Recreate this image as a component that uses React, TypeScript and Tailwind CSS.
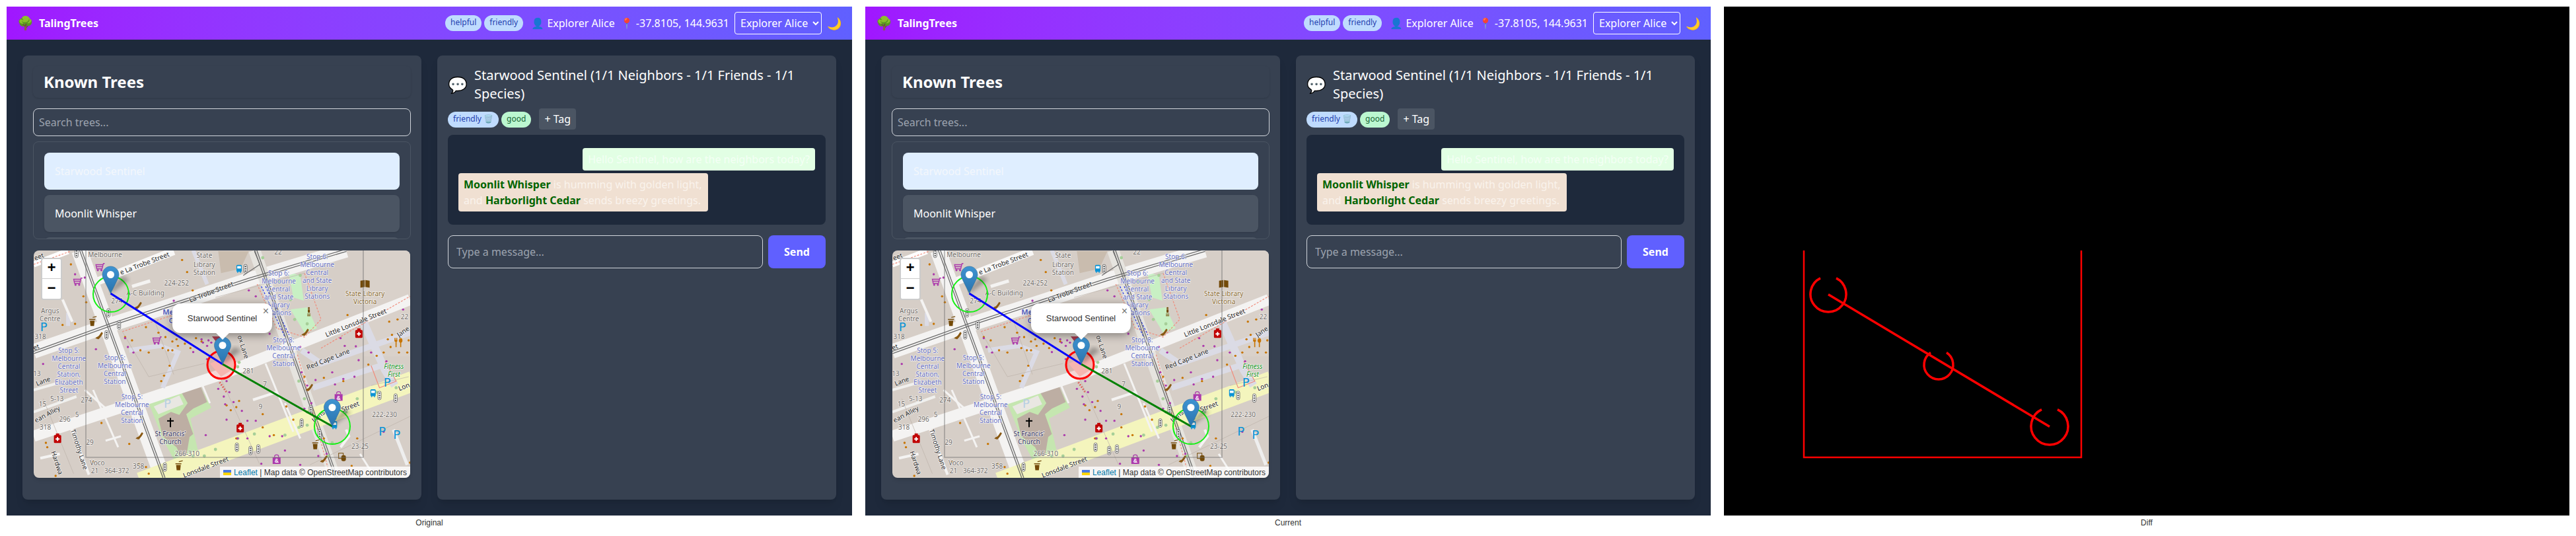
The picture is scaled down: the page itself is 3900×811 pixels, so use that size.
import React from "react";

const sans = "font-['Noto_Sans','DejaVu_Sans',sans-serif]";
const Z = (x: number, y: number): [number, number] => [x / 2.376 - 11, y / 3 - 9];
const P = (pts: number[][]) => pts.map((p) => Z(p[0], p[1]).map((n) => n.toFixed(1)).join(",")).join(" ");

const orange = [[175,360],[130,365],[205,235],[160,90],[215,262],[598,208],[560,70],[578,125],[430,375],[475,400],[500,420],[525,440],[545,460],[540,430],[570,450],[590,470],[610,425],[630,440],[490,470],[510,480],[525,480],[495,595],[515,550],[485,620],[440,490],[410,480],[380,435],[355,420],[270,810],[370,905],[405,995],[430,1010],[440,1040],[70,900],[75,920],[105,1050],[240,985],[735,752],[755,738],[765,710],[720,730],[850,770],[850,830],[755,880],[960,795],[890,865],[935,735],[1000,600],[1070,605],[1140,620],[1155,320],[1305,350],[1335,340],[1300,430],[1340,490],[1285,490],[1260,505],[1230,545],[1190,880],[1370,490],[1375,435],[1310,465],[1315,410],[1380,990],[1170,1005],[1070,880],[1155,1040]];
const purple = [[60,542],[250,475],[355,425],[365,465],[385,490],[600,488],[635,445],[655,435],[630,430],[650,460],[665,445],[650,520],[720,620],[690,655],[730,670],[710,690],[745,715],[715,725],[720,795],[775,755],[795,800],[825,800],[760,880],[645,865],[795,880],[845,995],[930,935],[875,870],[920,870],[1000,745],[1025,720],[1010,640],[1100,580],[1140,610],[1180,600],[1040,615],[1195,525],[1185,462],[1145,460],[1130,425],[1240,490],[1355,295],[1295,530],[990,580],[1015,490],[985,465],[800,208],[825,235],[850,275],[875,405],[175,135],[210,150],[530,255],[1285,850],[1080,950],[1050,960],[1110,635],[1120,1030],[985,1000]];
const greens = [[600,960],[640,960],[680,930],[760,880],[820,860],[930,865],[980,830],[1110,790],[1150,760],[1190,700],[1260,670],[1330,650],[765,535],[760,555],[1010,820],[880,20],[850,60],[910,170],[950,250],[965,340],[1010,360],[985,140],[1000,700],[1010,760],[980,620],[1100,900],[1085,960]];
const lights = [[180,40],[788,110],[295,310],[333,365],[288,410],[1270,685],[1328,697],[990,810],[757,920],[806,935],[834,928],[498,1010],[1023,750],[1055,860]];

const stops: [number, number, string[]][] = [
  [1046, 55, ["Stop 6:", "Melbourne", "Central", "and State", "Library", "Stations"]],
  [908, 131, ["Stop 6:", "Melbourne", "Central", "and State", "Library", "Stations"]],
  [153, 482, ["Stop 5:", "Melbourne", "Central", "Station,", "Elizabeth", "Street"]],
  [318, 513, ["Stop 5:", "Melbourne", "Central", "Station"]],
  [380, 690, ["Stop 5:", "Melbourne", "Central", "Station"]],
  [925, 433, ["Stop 8:", "Melbourne", "Central", "Station"]],
];
const greys: [number, number, string][] = [[540,176,"224-252"],[325,255,"274"],[428,220,"A-C Building"],[85,300,"Argus"],[85,338,"Centre"],[50,417,"318"],[905,33,"22"],[1360,328,"22"],[798,575,"281"],[858,635,"7"],[842,735,"9"],[110,700,"5-13"],[58,725,"15"],[216,705,"274"],[182,772,"5"],[138,792,"296"],[68,828,"318"],[38,585,"13"],[228,897,"29"],[255,992,"Voco"],[246,1028,"21"],[325,1026,"364-372"],[403,1005,"358"],[578,950,"266-310"],[1288,772,"222-230"],[1200,917,"23-25"],[283,46,"Melbourne"],[640,50,"State"],[640,90,"Library"],[640,128,"Station"]];
const roads: [number, number, string, number][] = [[425,85,"e La Trobe Street",-21],[665,215,"La Trobe Street",-21],[1185,355,"Little Lonsdale Street",-22],[1085,520,"Red Cape Lane",-22],[1355,395,"Jane",-35],[60,620,"Lane",-21],[75,770,"ean Alley",-28],[190,930,"Timothy Lane",72],[110,990,"Hardwa",72],[780,465,"ox Lane",72],[645,1010,"Lonsdale Street",-21],[1165,735,"Street",-21],[1050,780,"Lons",-40],[1358,645,"Lon",-21],[45,55,"eet",-21],[35,465,"et",-21]];
const carts = [[265,102],[185,168],[470,435]];
const buses = [[765,110],[1247,675],[1108,820]];
const phones = [[402,278],[262,415],[1003,400],[1018,650],[407,870],[1070,975]];
const coffees = [[238,350],[1040,910],[548,1005]];
const bags = [[1123,688],[900,975]];
const reds = [[1196,403],[112,880],[769,832]];
const parks: [number, number, string][] = [[62,375,"#0a93d6"],[1298,628,"#0a93d6"],[1280,848,"#0a93d6"],[1332,863,"#0a93d6"],[507,722,"#b8cfe4"]];

function Marker({ x, y }: { x: number; y: number }) {
  return (
    <g transform={`translate(${x - 12.5},${y - 41})`}>
      <path d="M13 41 L41 20 L30 15 L12 35z" fill="#000" opacity="0.3" filter="url(#mb)" />
      <path d="M12.5 0C5.6 0 0 5.6 0 12.5c0 2.3.8 4.8 2 7L12.5 41 23 19.5c1.2-2.2 2-4.7 2-7C25 5.6 19.4 0 12.5 0z" fill="url(#mg)" stroke="#2e6c97" strokeWidth="0.6" />
      <circle cx="12.5" cy="12.5" r="5.5" fill="#fff" />
    </g>
  );
}

function MapArt() {
  return (
    <svg viewBox="0 0 570 344" width="570" height="344" className="block">
      <defs>
        <linearGradient id="mg" x1="0" y1="0" x2="0" y2="1"><stop offset="0" stopColor="#3f94d2" /><stop offset="1" stopColor="#2a73ad" /></linearGradient>
        <filter id="mb"><feGaussianBlur stdDeviation="3" /></filter>
      </defs>
      <rect width="570" height="344" fill="#d6cec7" />
      <rect x="499" width="71" height="160" fill="#d9d1ca" />
      <g fill="none" strokeLinecap="butt">
        <polygon points={P([[943,126],[985,140],[998,255],[960,240]])} fill="#c8f0c4" />
        <polygon points={P([[950,295],[1010,285],[1045,380],[1000,400]])} fill="#c8f0c4" />
        <polygon points={P([[440,720],[620,630],[665,740],[590,790],[620,950],[540,1000],[490,880]])} fill="#c5e6b0" />
        <polygon points={P([[555,665],[625,640],[650,715],[600,745],[575,770],[600,860],[560,900],[535,800],[580,720]])} fill="#bdaea3" />
        <polygon points={P([[475,790],[520,760],[565,780],[590,850],[570,1000],[540,920],[490,870]])} fill="#bdaea3" />
        <polygon points={P([[458,735],[550,685],[565,725],[475,770]])} fill="#e9e7e2" />
        <polygon points={P([[690,30],[800,30],[770,110],[700,130]])} fill="#c9bcae" />
        <polyline points={P([[26,90],[150,30]])} stroke="#fff" strokeWidth="9" />
        <polyline points={P([[240,175],[530,30]])} stroke="#f8f7f6" strokeWidth="12" />
        <polyline points={P([[26,485],[300,365],[560,260],[800,160],[1150,26]])} stroke="#f4f3f2" strokeWidth="22" />
        <polyline points={P([[190,26],[490,1058]])} stroke="#f4f3f2" strokeWidth="24" />
        <polyline points={P([[820,26],[1110,1058]])} stroke="#e6e4df" strokeWidth="18" />
        <polyline points={P([[26,870],[700,590],[1380,250]])} stroke="#f4f3f2" strokeWidth="17" />
        <polyline points={P([[410,1080],[1390,620]])} stroke="#f4f5bd" strokeWidth="31" />
        <polyline points={P([[370,480],[480,460],[545,490],[490,650]])} stroke="#dbdbe5" strokeWidth="7" />
        <polyline points={P([[150,310],[150,370]])} stroke="#dbdbe5" strokeWidth="6" />
        <polyline points={P([[1030,650],[1200,580],[1300,540]])} stroke="#dbdbe5" strokeWidth="9" />
        <polyline points={P([[990,480],[1060,540],[1380,400]])} stroke="#dbdbe5" strokeWidth="9" />
        <polyline points={P([[1210,345],[1290,570],[1325,640]])} stroke="#dbdbe5" strokeWidth="12" />
        <polyline points={P([[600,26],[650,180]])} stroke="#dbdbe5" strokeWidth="6" />
        <polyline points={P([[380,190],[445,165]])} stroke="#f4f3f2" strokeWidth="5" />
        <polyline points={P([[130,250],[165,350]])} stroke="#f4f3f2" strokeWidth="4" />
        <polyline points={P([[160,830],[225,1045]])} stroke="#f4f3f2" strokeWidth="4" />
        <polyline points={P([[50,970],[120,950]])} stroke="#f4f3f2" strokeWidth="4" />
        <polyline points={P([[210,660],[300,760]])} stroke="#f4f3f2" strokeWidth="3" />
        <polyline points={P([[240,660],[330,920]])} stroke="#f4f3f2" strokeWidth="3" />
        <polyline points={P([[285,890],[340,870]])} stroke="#f4f3f2" strokeWidth="3" />
        <polyline points={P([[630,630],[660,720]])} stroke="#f4f3f2" strokeWidth="3" />
        <polyline points={P([[815,705],[900,670]])} stroke="#f4f3f2" strokeWidth="4" />
        <polyline points={P([[860,540],[960,850]])} stroke="#f4f3f2" strokeWidth="3" />
        <polyline points={P([[930,720],[985,880]])} stroke="#f4f3f2" strokeWidth="3" />
        <polyline points={P([[1200,950],[1250,1050]])} stroke="#f4f3f2" strokeWidth="3" />
        <polyline points={P([[1150,840],[1160,870],[1130,920]])} stroke="#f4f3f2" strokeWidth="4" />
        <polyline points={P([[1320,840],[1370,1000]])} stroke="#eee" strokeWidth="5" />
        <polyline points={P([[26,760],[180,690]])} stroke="#f0f0ee" strokeWidth="4" />
        <polyline points={P([[26,660],[110,630]])} stroke="#f0f0ee" strokeWidth="4" />
        <polyline points={P([[345,395],[600,290]])} stroke="#f08c7c" strokeWidth="1.2" strokeDasharray="3 2" />
        <polyline points={P([[26,90],[160,30]])} stroke="#f08c7c" strokeWidth="1.2" strokeDasharray="3 2" />
        <polyline points={P([[830,180],[900,380],[1000,420],[1060,340],[1000,130]])} stroke="#f08c7c" strokeWidth="1.2" strokeDasharray="3 2" />
        <polyline points={P([[975,500],[1090,1040]])} stroke="#f08c7c" strokeWidth="1.2" strokeDasharray="3 2" />
        <polyline points={P([[1060,470],[1380,235]])} stroke="#f08c7c" strokeWidth="1.2" strokeDasharray="3 2" />
        <polyline points={P([[1240,550],[1270,650],[1330,620],[1290,530]])} stroke="#f08c7c" strokeWidth="1.2" />
        <polyline points={P([[695,625],[720,670]])} stroke="#e0605a" strokeWidth="3" strokeDasharray="2 2" />
        <polygon points={P([[660,540],[745,500],[750,560],[700,600]])} fill="#f5cfc8" />
        <polyline points={P([[845,190],[930,420]])} stroke="#2a3ce8" strokeWidth="1.2" strokeDasharray="3 2" />
        <polyline points={P([[860,190],[945,410]])} stroke="#2a3ce8" strokeWidth="1.2" strokeDasharray="3 2" />
        {[-1.6, 1.6].map((d) => (
          <g key={d} stroke="#6d6d6d" strokeWidth="1.3" transform={`translate(${d * 0.35},${d})`}>
            <polyline points={P([[26,490],[300,365],[560,258],[800,158],[1150,26]])} />
          </g>
        ))}
        {[-1.6, 1.6].map((d) => (
          <g key={d} stroke="#6d6d6d" strokeWidth="1.3" transform={`translate(${d},0)`}>
            <polyline points={P([[195,26],[495,1058]])} />
            <polyline points={P([[825,26],[1115,1058]])} />
          </g>
        ))}
        <polyline points={P([[820,30],[840,90],[780,140]])} stroke="#6d6d6d" strokeWidth="1.2" />
        <g stroke="#bdb3aa" strokeWidth="0.7">
          <polyline points={P([[345,395],[440,600],[640,540]])} />
          <polyline points={P([[460,340],[530,590]])} />
          <polyline points={P([[700,610],[840,1000]])} />
          <polyline points={P([[60,700],[170,1040]])} />
          <polyline points={P([[1020,1000],[1380,780]])} />
          <polyline points={P([[1240,640],[1375,600]])} />
          <polyline points={P([[680,240],[1000,130]])} />
        </g>
      </g>
      {greens.map(([x, y], i) => { const [a, b] = Z(x, y); return <circle key={i} cx={a} cy={b} r="2.4" fill="#a6cf98" />; })}
      {orange.map(([x, y], i) => { const [a, b] = Z(x, y); return <circle key={i} cx={a} cy={b} r="1.7" fill="#c77400" />; })}
      {purple.map(([x, y], i) => { const [a, b] = Z(x, y); return <circle key={i} cx={a} cy={b} r="1.7" fill="#ac39ac" />; })}
      {lights.map(([x, y], i) => { const [a, b] = Z(x, y); return (
        <g key={i}>
          <rect x={a - 2.5} y={b - 6.5} width="5" height="13" rx="2.5" fill="#fff" stroke="#555" strokeWidth="0.8" />
          <circle cx={a} cy={b - 3.5} r="1.2" fill="#555" /><circle cx={a} cy={b} r="1.2" fill="#555" /><circle cx={a} cy={b + 3.5} r="1.2" fill="#555" />
        </g>); })}
      {carts.map(([x, y], i) => { const [a, b] = Z(x, y); return (
        <g key={i} transform={`translate(${a - 7},${b - 6})`} fill="none" stroke="#ac39ac" strokeWidth="1.4">
          <path d="M14 0.7h-2l-2 8H2L0.7 2.5H11.5M2 5.5h9" /><circle cx="3.5" cy="10.8" r="0.9" fill="#ac39ac" /><circle cx="9" cy="10.8" r="0.9" fill="#ac39ac" />
        </g>); })}
      {buses.map(([x, y], i) => { const [a, b] = Z(x, y); return (
        <g key={i} transform={`translate(${a - 4},${b - 6})`}>
          <rect width="8" height="10.5" rx="1.5" fill="#0a93d6" /><rect x="1.2" y="2" width="5.6" height="3.6" fill="#fff" /><rect x="1" y="10.5" width="1.6" height="1.5" fill="#0a93d6" /><rect x="5.4" y="10.5" width="1.6" height="1.5" fill="#0a93d6" />
        </g>); })}
      {phones.map(([x, y], i) => { const [a, b] = Z(x, y); return <path key={i} transform={`translate(${a - 6},${b - 6})`} d="M0 9.5 C3 10.5 4 11 5 10.8 C8 8 10 5 11.6 1.6 L9.6 0 L8 2 C6.5 5 4.5 7 2.2 7.6 Z" fill="#8a5a14" />; })}
      {coffees.map(([x, y], i) => { const [a, b] = Z(x, y); return (
        <g key={i} transform={`translate(${a - 5},${b - 7})`} fill="#734a08">
          <rect x="0" y="3" width="9" height="1.4" /><path d="M1 5.5h7l-.8 8H1.8z" /><rect x="5" y="0" width="6" height="1.2" transform="rotate(-14 5 0)" />
        </g>); })}
      {bags.map(([x, y], i) => { const [a, b] = Z(x, y); return (
        <g key={i} transform={`translate(${a - 6},${b - 7})`}>
          <path d="M3 4V2.4a3 2.2 0 0 1 6 0V4" fill="none" stroke="#ac39ac" strokeWidth="1.2" /><rect y="4" width="12" height="10" fill="#ac39ac" />
          <text x="6" y="12.3" textAnchor="middle" fontSize="8.5" fontWeight="700" fill="#fff" fontFamily="'Liberation Sans',sans-serif">&amp;</text>
        </g>); })}
      {reds.map(([x, y], i) => { const [a, b] = Z(x, y); return (
        <g key={i} transform={`translate(${a - 5.5},${b - 7.5})`}>
          <rect x="3" y="0" width="5" height="3" fill="#c00000" /><rect y="2.5" width="11" height="12" rx="1.5" fill="#c00000" /><path d="M4.5 5.5h2v2h2v2h-2v2h-2v-2h-2v-2h2z" fill="#fff" />
        </g>); })}
      {parks.map(([x, y, c], i) => { const [a, b] = Z(x, y); return <text key={i} x={a} y={b + 6} textAnchor="middle" fontSize="18" fill={c} fontFamily="'DejaVu Sans',sans-serif">P</text>; })}
      <g transform={`translate(${Z(1218, 178)[0] - 7},${Z(1218, 178)[1] - 6})`} fill="#734a08"><path d="M0 1.5 L6.5 0.5 V11 L0 12z M7.5 .5 L14 1.5 V12 L7.5 11z" /></g>
      <g transform={`translate(${Z(1338, 445)[0] - 6},${Z(1338, 445)[1] - 7})`} fill="#c77400"><path d="M0 0h1v3h.7V0h1v3h.7V0h1v5L3.3 6v8H1.7V6L0 5z" /><path d="M9.5 0c2 0 2.7 2.5 2.7 4.2S11 7 10.3 7.2V14H8.7V7.2C8 7 6.8 6 6.8 4.2S7.5 0 9.5 0z" /></g>
      <g transform={`translate(${Z(1016, 305)[0] - 2.5},${Z(1016, 305)[1] - 7})`} fill="#734a08"><circle cx="2.5" cy="1.5" r="1.4" /><rect x="1" y="3.4" width="3" height="5" /><rect x="0" y="10" width="5" height="1.2" /><rect x="0" y="12.4" width="5" height="1.2" /></g>
      <g transform={`translate(${Z(518, 808)[0]},${Z(518, 808)[1]})`} fill="#000"><rect x="-1" y="-7" width="2" height="14" /><rect x="-5" y="-3.5" width="10" height="2" /></g>
      <g transform={`translate(${Z(1135, 965)[0] - 6},${Z(1135, 965)[1] - 6})`}><rect x="1" y="0" width="7" height="8" fill="none" stroke="#734a08" strokeWidth="1" /><rect x="5" y="3" width="7" height="9" rx="3" fill="#734a08" /></g>

      <g fontFamily="'Noto Sans',sans-serif" style={{ paintOrder: "stroke" }} stroke="#fff" strokeOpacity="0.7" strokeWidth="1.6" strokeLinejoin="round">
        {stops.map(([x, y, lines], i) => lines.map((l, j) => { const [a, b] = Z(x, y + j * 36); return <text key={`${i}-${j}`} x={a} y={b + 3.5} textAnchor="middle" fontSize="10" fill="#6670c4">{l}</text>; }))}
        {greys.map(([x, y, t], i) => { const [a, b] = Z(x, y); return <text key={i} x={a} y={b + 3.5} textAnchor="middle" fontSize="10" fill="#6f6a66">{t}</text>; })}
        {roads.map(([x, y, t, r], i) => { const [a, b] = Z(x, y); return <text key={i} x={a} y={b + 3.5} textAnchor="middle" fontSize="10" fill="#222" transform={`rotate(${r} ${a} ${b})`}>{t}</text>; })}
        <text x={Z(490, 305)[0]} y={Z(490, 305)[1] + 4} fontSize="11" fontWeight="700" fill="#5a66c0">Melbourne</text>
        <text x={Z(512, 345)[0]} y={Z(512, 345)[1] + 4} fontSize="11" fontWeight="700" fill="#5a66c0">Central</text>
        <text x={Z(1218, 224)[0]} y={Z(1218, 224)[1] + 3.5} textAnchor="middle" fontSize="10" fill="#8a6a30">State Library</text>
        <text x={Z(1218, 260)[0]} y={Z(1218, 260)[1] + 3.5} textAnchor="middle" fontSize="10" fill="#8a6a30">Victoria</text>
        <text x={Z(518, 860)[0]} y={Z(518, 860)[1] + 3.5} textAnchor="middle" fontSize="10" fill="#33335f">St Francis'</text>
        <text x={Z(518, 895)[0]} y={Z(518, 895)[1] + 3.5} textAnchor="middle" fontSize="10" fill="#33335f">Church</text>
        <text x={Z(1322, 552)[0]} y={Z(1322, 552)[1] + 3.5} textAnchor="middle" fontSize="10" fontStyle="italic" fill="#1a9a2a">Fitness</text>
        <text x={Z(1322, 588)[0]} y={Z(1322, 588)[1] + 3.5} textAnchor="middle" fontSize="10" fontStyle="italic" fill="#1a9a2a">First</text>
      </g>
      <path d="M79 0V313H499V0" fill="none" stroke="#6b6b6b" strokeOpacity="0.5" strokeWidth="1.6" />
      <polygon points="270,130 283,130 295,150 285,150" fill="#9c2038" opacity="0.85" />
      <circle cx="284" cy="173" r="21" fill="#ff0000" fillOpacity="0.12" stroke="#ff0000" strokeWidth="3" />
      <circle cx="117" cy="66" r="27" fill="none" stroke="#14f014" strokeWidth="2" />
      <circle cx="452" cy="266" r="27" fill="none" stroke="#14f014" strokeWidth="2" />
      <line x1="116.5" y1="65" x2="286" y2="172" stroke="#0000ff" strokeWidth="3" />
      <line x1="286" y1="172" x2="452" y2="266" stroke="#008000" strokeWidth="3" />
      <Marker x={116.5} y={65} />
      <Marker x={286} y={172} />
      <Marker x={452} y={266} />
    </svg>
  );
}

function Chip({ children, tone }: { children: React.ReactNode; tone: "blue" | "green" }) {
  return (
    <span className={`inline-flex h-6 items-start rounded-xl px-2 pt-[3px] text-xs leading-4 ${tone === "blue" ? "bg-[#bfdbfe] text-[#1e40af]" : "bg-[#bbf7d0] text-[#166534]"}`}>
      {children}
    </span>
  );
}

function Panel() {
  return (
    <div className={`flex h-[770px] w-[1280px] flex-col bg-[#1e293b] text-white ${sans}`}>
      <header className="flex h-[50px] items-center justify-between bg-gradient-to-r from-[#a016ff] to-[#6060ff] pl-[16px] pr-[16px]">
        <div className="flex items-center gap-[8px]">
          <span className="text-[20px] leading-none">🌳</span>
          <span className="text-base font-bold">TalingTrees</span>
        </div>
        <div className="flex items-center gap-[8px] text-base">
          <div className="flex items-center gap-1"><Chip tone="blue">helpful</Chip><Chip tone="blue">friendly</Chip></div>
          <span className="ml-1">👤 Explorer Alice</span>
          <span>📍 -37.8105, 144.9631</span>
          <select className="h-[34px] w-[132px] rounded border border-white bg-transparent pl-1 text-base text-white">
            <option className="text-black">Explorer Alice</option>
          </select>
          <span className="text-lg leading-none">🌙</span>
        </div>
      </header>
      <main className="grid flex-1 grid-cols-2 gap-6 px-6 pb-6 pt-6">
        <section className="flex flex-col rounded-lg bg-[#374151] p-4 shadow-lg">
          <div className="flex h-12 items-center rounded-lg px-4 shadow-sm">
            <h2 className="text-2xl font-bold">Known Trees</h2>
          </div>
          <input placeholder="Search trees..." className="mt-4 h-[42px] w-full rounded-lg border border-[#d1d5db] bg-[#374151] px-2 text-base text-white placeholder:text-[#9ca3af]" />
          <div className="mt-2 h-[148px] overflow-hidden rounded-lg border border-[#4b5563] p-4">
            <div className="flex flex-col gap-2">
              <div className="flex h-14 items-center rounded-lg bg-[#dfeeff] px-4 text-base text-[#f3f7fc]">Starwood Sentinel</div>
              <div className="flex h-14 items-center rounded-lg bg-[#4b5563] px-4 text-base shadow-sm">Moonlit Whisper</div>
              <div className="flex h-14 items-center rounded-lg bg-[#4b5563] px-4 text-base shadow-sm">Harborlight Cedar</div>
            </div>
          </div>
          <div className="relative ml-px mt-[17px] h-[344px] w-[570px] overflow-hidden rounded-lg shadow-md">
            <MapArt />
            <div className="absolute left-[11px] top-[11px] flex w-8 flex-col overflow-hidden rounded-sm border-2 border-black/20 bg-white text-black">
              <span className="flex h-[30px] items-center justify-center border-b border-[#ccc] font-['Liberation_Mono',monospace] text-[22px] font-bold">+</span>
              <span className="flex h-[30px] items-center justify-center font-['Liberation_Mono',monospace] text-[22px] font-bold">−</span>
            </div>
            <div className="absolute left-[210px] top-[80px] flex h-[45px] w-[151px] items-center justify-center rounded-xl bg-white font-['Liberation_Sans',sans-serif] text-[13px] text-[#333] shadow-[0_3px_14px_rgba(0,0,0,0.4)]">
              Starwood Sentinel
              <span className="absolute right-[5px] top-[2px] text-base leading-5 text-[#757575]">×</span>
              <span className="absolute left-1/2 top-[38px] h-[14px] w-[14px] -translate-x-1/2 rotate-45 bg-white" />
            </div>
            <div className="absolute bottom-0 right-0 flex h-[17px] items-center gap-1 bg-white/80 px-[5px] font-['Liberation_Sans',sans-serif] text-xs text-[#333]">
              <svg width="12" height="8" viewBox="0 0 12 8"><rect width="12" height="4" fill="#4C7BE1" /><rect y="4" width="12" height="4" fill="#FFD500" /></svg>
              <span><span className="text-[#0078a8]">Leaflet</span> | Map data © OpenStreetMap contributors</span>
            </div>
          </div>
        </section>
        <section className="flex flex-col rounded-lg bg-[#374151] p-4 shadow-lg">
          <div className="flex items-center gap-[10px]">
            <span className="text-[24px] leading-none">💬</span>
            <h2 className="text-xl leading-7">Starwood Sentinel (1/1 Neighbors - 1/1 Friends - 1/1 Species)</h2>
          </div>
          <div className="mt-2 flex items-start gap-1">
            <div className="mt-[2px]"><Chip tone="blue">friendly 🗑️</Chip></div>
            <div className="mt-[2px]"><Chip tone="green">good</Chip></div>
            <button className="ml-2 h-8 rounded bg-[#4b5563] px-2 text-base">+ Tag</button>
          </div>
          <div className="mt-2 flex h-[136px] flex-col items-start gap-1 rounded-lg bg-[#1e293b] p-4 pt-5 text-base">
            <div className="self-end rounded bg-[#e2ffe4] px-2 py-[5px] leading-6 text-[#f4fff5]">Hello Sentinel, how are the neighbors today?</div>
            <div className="w-[378px] rounded bg-[#f0e0d2] px-2 py-[5px] leading-6 text-[#faf3ec]">
              <b className="text-[#006400]">Moonlit Whisper</b> is humming with golden light, and <b className="text-[#006400]">Harborlight Cedar</b> sends breezy greetings.
            </div>
          </div>
          <div className="mt-4 flex gap-2">
            <input placeholder="Type a message..." className="h-[50px] min-w-0 flex-1 rounded-lg border border-[#d1d5db] bg-[#374151] px-3 text-base text-white placeholder:text-[#9ca3af]" />
            <button className="h-[50px] w-[87px] rounded-lg bg-[#6060ff] text-base font-bold">Send</button>
          </div>
        </section>
      </main>
    </div>
  );
}

function DiffArt() {
  const arc = (cx: number, cy: number, r: number, w: number) => {
    const dx = 12;
    const dy = Math.sqrt(r * r - dx * dx);
    return <path d={`M${cx - dx} ${cy - dy}A${r} ${r} 0 1 0 ${cx + dx} ${cy - dy}`} fill="none" stroke="#f00" strokeWidth={w} />;
  };
  return (
    <svg width="1280" height="770" viewBox="0 0 1280 770" className="block bg-black">
      <path d="M121 369V682H541V369" fill="none" stroke="#f00" strokeWidth="2.5" />
      {arc(158, 435, 27, 3.5)}
      {arc(493, 635, 28, 3.5)}
      {arc(325, 542, 22, 3.5)}
      <line x1="158" y1="435.5" x2="493" y2="635.5" stroke="#f00" strokeWidth="3.5" />
    </svg>
  );
}

function Column({ label, children }: { label: string; children: React.ReactNode }) {
  return (
    <div className="w-[1280px]">
      {children}
      <div className="mt-[3px] text-center font-['Liberation_Sans',sans-serif] text-xs leading-4 text-[#333]">{label}</div>
    </div>
  );
}

export default function App() {
  return (
    <div className="flex h-[811px] w-[3900px] gap-5 overflow-hidden bg-white p-[10px]">
      <Column label="Original"><Panel /></Column>
      <Column label="Current"><Panel /></Column>
      <Column label="Diff"><DiffArt /></Column>
    </div>
  );
}
